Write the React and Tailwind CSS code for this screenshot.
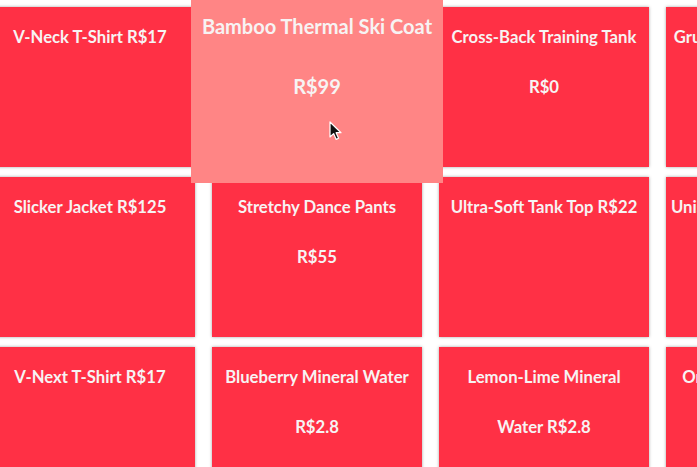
const rows = [
  [
    ["V-Neck T-Shirt R$17"],
    ["Bamboo Thermal Ski Coat", "R$99"],
    ["Cross-Back Training Tank", "R$0"],
    ["Grunge Skater Jeans R$68"],
  ],
  [
    ["Slicker Jacket R$125"],
    ["Stretchy Dance Pants", "R$55"],
    ["Ultra-Soft Tank Top R$22"],
    ["Unisex Graphic Hoodie R$45"],
  ],
  [
    ["V-Next T-Shirt R$17"],
    ["Blueberry Mineral Water", "R$2.8"],
    ["Lemon-Lime Mineral", "Water R$2.8"],
    ["Orange Sparkling Water", "R$2.8"],
  ],
]

function Cursor() {
  return (
    <svg className="absolute left-[329px] top-[121px] z-20" width="14" height="20" viewBox="0 0 14 20">
      <path
        d="M1 1 L1 16 L4.6 12.6 L7.2 18.4 L9.6 17.3 L7.1 11.7 L12 11.7 Z"
        fill="#111"
        stroke="#fff"
        strokeWidth="1.2"
        strokeLinejoin="round"
      />
    </svg>
  )
}

export default function App() {
  return (
    <div
      className="relative w-[697px] h-[467px] overflow-hidden bg-white"
      style={{ fontFamily: "Lato, 'Open Sans', sans-serif" }}
    >
      <div className="ml-[-15px] pt-[7px] grid grid-cols-[repeat(4,210px)] auto-rows-[160px] gap-x-[17px] gap-y-[10px]">
        {rows.flat().map((lines, i) => {
          const hot = i === 1
          return (
            <div
              key={i}
              className={
                hot
                  ? "relative z-10 scale-[1.2] bg-[#ff8585] px-[5px] pt-[5px] text-center"
                  : "bg-[#ff3045] shadow-[0_0_3px_rgba(0,0,0,0.35)] px-[5px] pt-[5px] text-center"
              }
            >
              {lines.map((l, j) => (
                <div key={j} className="leading-[50px] text-[16.7px] font-bold text-[#f7f3f3] whitespace-nowrap">
                  {l}
                </div>
              ))}
            </div>
          )
        })}
      </div>
      <Cursor />
    </div>
  )
}
